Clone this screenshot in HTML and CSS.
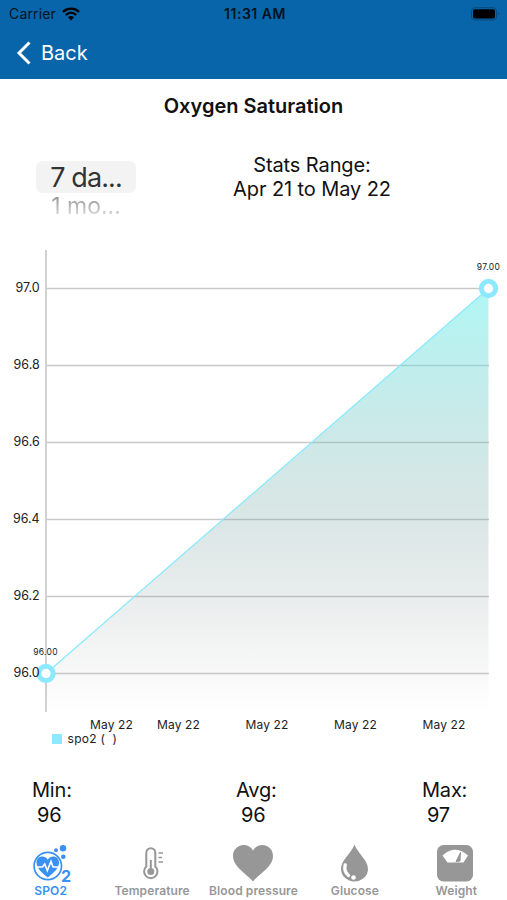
FILE: index.html
```
<!DOCTYPE html>
<html lang="en">
<head>
    <meta charset="UTF-8">
    <meta name="viewport" content="width=device-width, initial-scale=1.0">
    <title>Oxygen Saturation</title>
    <link rel="stylesheet" href="styles.css">
</head>
<body>
    <header class="header">
        <div class="status-bar">
            <div class="carrier">
                <span>Carrier</span>
                <svg width="18" height="14" viewBox="0 0 18 14">
                    <path d="M1 4.8C5.5.6 12.5.6 17 4.8" fill="none" stroke="#000" stroke-width="2.4"/>
                    <path d="M3.8 8C7 5.1 11 5.1 14.2 8" fill="none" stroke="#000" stroke-width="2.3"/>
                    <path d="M9 13.5L5.9 10.3Q9 7.8 12.1 10.3Z"/>
                </svg>
            </div>
            <div class="time">11:31 AM</div>
            <svg class="battery" width="30" height="14" viewBox="0 0 30 14">
                <rect x=".5" y=".7" width="25" height="12.3" rx="3.5" fill="none" stroke="#06497a"/>
                <rect x="2" y="2.3" width="22" height="9.2" rx="2"/>
                <path d="M27.3 5Q29.5 6.8 27.3 8.7Z" fill="#06497a"/>
            </svg>
        </div>
        <div class="nav">
            <svg width="16" height="26" viewBox="0 0 16 26">
                <path d="M13.500 2.500L3 13L13.500 23.500" fill="none" stroke="#fff" stroke-width="3"/>
            </svg>
            <span>Back</span>
        </div>
    </header>

    <h1 class="title">Oxygen Saturation</h1>

    <section class="range">
        <div class="picker">
            <div class="picker-selected">7 da...</div>
            <div class="picker-next">1 mo...</div>
        </div>
        <div class="range-text">Stats Range:<br>Apr 21 to May 22</div>
    </section>

    <svg class="chart" width="507" height="520" viewBox="0 240 507 520">
        <defs>
            <linearGradient id="area" gradientUnits="userSpaceOnUse" x1="0" y1="288" x2="0" y2="712">
                <stop offset="0" stop-color="#5fefe9" stop-opacity=".5"/>
                <stop offset=".18" stop-color="#69d9d7" stop-opacity=".43"/>
                <stop offset=".36" stop-color="#70c0bd" stop-opacity=".35"/>
                <stop offset=".545" stop-color="#6b9f9b" stop-opacity=".25"/>
                <stop offset=".727" stop-color="#6c8787" stop-opacity=".15"/>
                <stop offset=".91" stop-color="#777" stop-opacity=".05"/>
                <stop offset="1" stop-color="#777" stop-opacity="0"/>
            </linearGradient>
        </defs>
        <g class="grid">
            <path d="M46 288.500H489M46 365.500H489M46 442.500H489M46 519.500H489M46 596.500H489M46 673.500H489"/>
            <path class="axis" d="M46 250V712"/>
        </g>
        <path d="M46 673.500L488.500 288.500V712H46Z" fill="url(#area)"/>
        <path class="line" d="M46 673.500L488.500 288.500"/>
        <circle class="point" cx="46" cy="673.500" r="7.2"/>
        <circle class="point" cx="488.500" cy="288.500" r="7.2"/>
        <g class="y-labels">
            <text x="39.7" y="292">97.0</text>
            <text x="39.7" y="369">96.8</text>
            <text x="39.7" y="446">96.6</text>
            <text x="39.7" y="523">96.4</text>
            <text x="39.7" y="600">96.2</text>
            <text x="39.7" y="677">96.0</text>
        </g>
        <g class="values">
            <text x="45.500" y="654.500">96.00</text>
            <text x="488.500" y="269.500">97.00</text>
        </g>
        <g class="x-labels">
            <text x="111.500" y="728.500">May 22</text>
            <text x="178.500" y="728.500">May 22</text>
            <text x="267" y="728.500">May 22</text>
            <text x="355.500" y="728.500">May 22</text>
            <text x="444" y="728.500">May 22</text>
        </g>
        <rect x="52" y="734" width="10" height="10" fill="#8ce9ff"/>
        <text class="legend" x="67.500" y="743" xml:space="preserve">spo2 (  )</text>
    </svg>

    <section class="stats">
        <div class="stat">Min:<span>96</span></div>
        <div class="stat">Avg:<span>96</span></div>
        <div class="stat">Max:<span>97</span></div>
    </section>

    <nav class="tabs">
        <a class="tab active">
            <svg width="40" height="40" viewBox="0 0 40 40">
                <circle cx="16.800" cy="23" r="13.700" fill="none" stroke="currentColor" stroke-width="1.700"/>
                <path d="M16.800 34.500C11 30 5.500 25 5.500 19.500C5.500 13 13.500 11.500 16.800 16.800C20 11.500 28 13 28 19.500C28 25 22.500 30 16.800 34.500Z" fill="currentColor"/>
                <path d="M5 24H11.500L13.700 21L16.300 27.500L20 18.500L22 24H28.500" fill="none" stroke="#fff" stroke-width="1.700"/>
                <circle cx="32" cy="5.300" r="3.200" fill="currentColor"/>
                <circle cx="25" cy="7.300" r="2" fill="currentColor"/>
                <circle cx="32.300" cy="13.800" r="2.300" fill="currentColor"/>
            </svg>
            <b class="sub">2</b>
            <span>SPO2</span>
        </a>
        <a class="tab">
            <svg width="40" height="40" viewBox="0 0 40 40">
                <path d="M14.300 23.500V9.700A4.500 4.500 0 0 1 23.300 9.700V23.500A6.700 6.700 0 1 1 14.300 23.500Z" fill="none" stroke="currentColor" stroke-width="2"/>
                <path d="M18.800 17V28" stroke="currentColor" stroke-width="2"/>
                <circle cx="18.800" cy="28.500" r="3.500" fill="currentColor"/>
                <path d="M26.500 10H31M26.500 14.500H30M26.500 19H31" stroke="currentColor" stroke-width="1.600"/>
            </svg>
            <span>Temperature</span>
        </a>
        <a class="tab">
            <svg width="40" height="40" viewBox="0 0 40 40">
                <path d="M20 38.500C14 31 0 24 0 13C0 1.500 14.500-2 20 7.500C25.500-2 40 1.500 40 13C40 24 26 31 20 38.500Z" fill="currentColor"/>
            </svg>
            <span>Blood pressure</span>
        </a>
        <a class="tab">
            <svg width="40" height="40" viewBox="0 0 40 40">
                <path d="M19.500 1.500C23 11 33 17 33 26A13.500 12.500 0 0 1 6 26C6 17 16 11 19.500 1.500Z" fill="currentColor"/>
                <path d="M10.200 22Q8.500 28.500 13.500 32.500" fill="none" stroke="#fff" stroke-width="3.400" stroke-linecap="round"/>
                <circle cx="18.500" cy="34.500" r="2.300" fill="#fff"/>
            </svg>
            <span>Glucose</span>
        </a>
        <a class="tab">
            <svg width="40" height="40" viewBox="0 0 40 40">
                <rect x="1" y="2" width="36" height="36.500" rx="6.500" fill="currentColor"/>
                <path d="M6.500 12.500Q19 1 32 12.500L27.500 19.500H11.500Z" fill="#fff"/>
                <path d="M20 18.500L24.500 9.500L24 18Z" fill="currentColor" stroke="currentColor"/>
            </svg>
            <span>Weight</span>
        </a>
    </nav>
</body>
</html>
```

FILE: styles.css
```
* {
    box-sizing: border-box;
}
body {
    margin: 0;
    width: 507px;
    height: 900px;
    overflow: hidden;
    background: #fff;
    color: #111;
    font-family: Inter, "Liberation Sans", sans-serif;
}
.header {
    height: 79px;
    background: #0865aa;
}
.status-bar {
    display: grid;
    grid-template-columns: 1fr auto 1fr;
    align-items: center;
    height: 27px;
    padding: 0 6px 0 9px;
    font-size: 14px;
    color: #05131f;
}
.carrier {
    display: flex;
    align-items: center;
    gap: 6px;
    letter-spacing: 0.15px;
}
.time {
    font-size: 14px;
    font-weight: 600;
    letter-spacing: 0.5px;
}
.battery {
    justify-self: end;
}
.nav {
    display: flex;
    align-items: center;
    gap: 9px;
    height: 51px;
    padding-left: 16px;
    color: #fff;
    font-size: 20px;
}
.title {
    margin: 0;
    padding-top: 14px;
    height: 71px;
    font-size: 20px;
    line-height: 26px;
    font-weight: 600;
    text-align: center;
}
.range {
    display: flex;
    height: 90px;
}
.picker {
    width: 100px;
    margin: 11px 0 0 36px;
    text-align: center;
}
.picker-selected {
    height: 32px;
    line-height: 33px;
    border-radius: 7px;
    background: #f3f3f3;
    color: #333;
    font-size: 27px;
    letter-spacing: -0.9px;
}
.picker-next {
    height: 26px;
    line-height: 26px;
    font-size: 23px;
    color: transparent;
    background: linear-gradient(#999 20%, #ddd 90%);
    background-clip: text;
    -webkit-background-clip: text;
}
.range-text {
    width: 200px;
    margin: 3px 0 0 76px;
    font-size: 20px;
    line-height: 24px;
    letter-spacing: -0.1px;
    text-align: center;
}
.chart {
    display: block;
}
.grid path {
    stroke: #c9c9c9;
    stroke-width: 1.5;
}
.grid .axis {
    stroke: #d2d2d2;
    stroke-width: 2;
}
.line {
    stroke: #8ce9ff;
    stroke-width: 1.3;
}
.point {
    fill: #fff;
    stroke: #8ce9ff;
    stroke-width: 5;
}
.chart text {
    fill: #222;
    font-size: 12px;
}
.chart .y-labels text {
    font-size: 12.5px;
    text-anchor: end;
}
.x-labels, .values {
    text-anchor: middle;
}
.chart .x-labels text {
    letter-spacing: 0.15px;
}
.chart .legend {
    letter-spacing: 0.3px;
}
.chart .values text {
    font-size: 8.5px;
    letter-spacing: 0.3px;
}
.stats {
    display: grid;
    grid-template-columns: 204px 186px auto;
    height: 83px;
    padding: 18px 0 0 32px;
    font-size: 20px;
    line-height: 25px;
    letter-spacing: -0.2px;
}
.stat span {
    display: block;
    padding-left: 5px;
}
.tabs {
    display: grid;
    grid-template-columns: repeat(5, 1fr);
    color: #979797;
}
.tab {
    position: relative;
    display: flex;
    flex-direction: column;
    align-items: center;
    gap: 1px;
    font-size: 12px;
    font-weight: 600;
    line-height: 14px;
    letter-spacing: 0.1px;
    white-space: nowrap;
}
.tab.active {
    color: #3990f5;
}
/* subscript over the corner of the O2 icon */
.sub {
    position: absolute;
    left: 61px;
    top: 24px;
    font-size: 16px;
    line-height: 18px;
    font-weight: 700;
}
```
